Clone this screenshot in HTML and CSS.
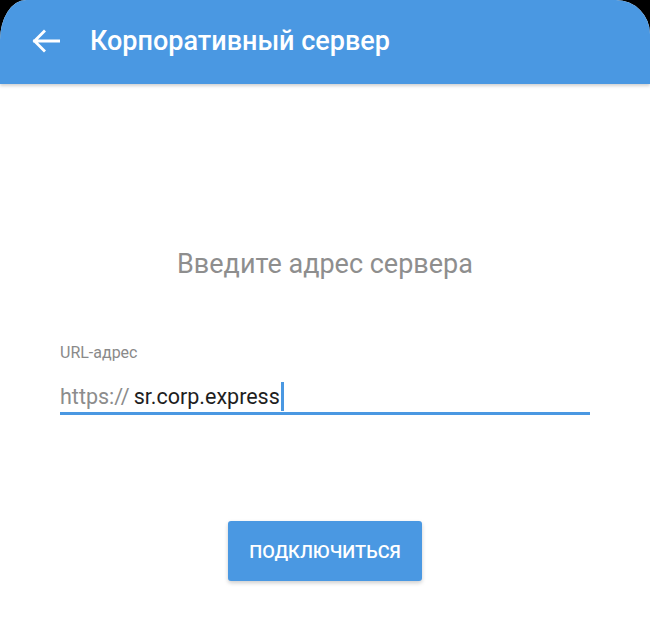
FILE: index.html
```html
<!DOCTYPE html>
<html lang="ru">
<head>
<meta charset="utf-8">
<link rel="stylesheet" href="styles.css">
</head>
<body>
<div class="screen">
  <header class="appbar">
    <svg class="back" width="28" height="24" viewBox="0 0 28 24">
      <path d="M27 12H2.5M12 2.5L2.5 12l9.5 9.5" fill="none" stroke="#fff" stroke-width="2.8" stroke-linecap="square"/>
    </svg>
    <h1 class="title">Корпоративный сервер</h1>
  </header>
  <main class="content">
    <p class="prompt">Введите адрес сервера</p>
    <div class="field">
      <label class="label">URL-адрес</label>
      <div class="input"><span class="prefix">https://</span><span class="value">sr.corp.express</span><span class="caret"></span></div>
    </div>
    <button class="btn">ПОДКЛЮЧИТЬСЯ</button>
  </main>
</div>
</body>
</html>
```
FILE: styles.css
```css
html, body { margin: 0; padding: 0; background: #000; }
body { width: 650px; height: 630px; overflow: hidden; font-family: Roboto, "Noto Sans", sans-serif; }
.screen {
  width: 650px; height: 630px; background: #fff;
  border-radius: 26px 34px 0 0 / 40px 34px 0 0;
  overflow: hidden;
}
.appbar {
  height: 84px; background: #4a98e2;
  display: flex; align-items: center;
  padding: 0 0 2px 32px; box-sizing: border-box;
  box-shadow: 0 2px 3px rgba(0,0,0,0.18);
  position: relative;
}
.back { display: block; margin-right: 30px; }
.title { margin: 0; color: #fff; font-size: 27px; font-weight: 500; letter-spacing: 0; }
.content { display: flex; flex-direction: column; align-items: center; }
.prompt { margin: 164px 0 0; font-size: 27px; color: #8e8e8e; font-weight: 400; line-height: 32px; }
.field { width: 530px; margin-top: 63px; }
.label { display: block; font-size: 16px; color: #8a8a8a; line-height: 20px; }
.input {
  margin-top: 17px; height: 32px; display: flex; align-items: center;
  border-bottom: 3px solid #4a98e2; font-size: 21.5px;
}
.prefix { color: #8c8c8c; margin-right: 4px; }
.value { color: #1e1e1e; }
.caret { width: 3px; height: 29px; background: #4a98e2; margin-left: 1px; }
.btn {
  margin-top: 106px; width: 194px; height: 60px; border: 0; border-radius: 3px;
  background: #4a98e2; color: #fff; font-family: Roboto, sans-serif;
  font-size: 18.3px; font-weight: 500; letter-spacing: 0;
  box-shadow: 0 2px 4px rgba(0,0,0,0.2);
}
```
